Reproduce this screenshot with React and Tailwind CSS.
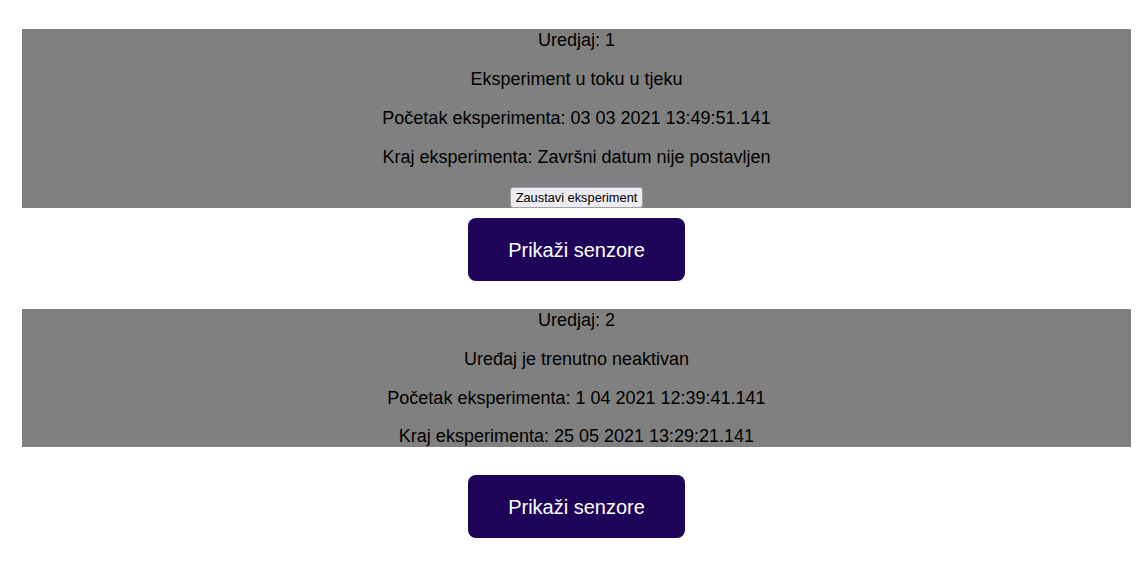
const devices = [
  {
    id: 1,
    status: "Eksperiment u toku u tjeku",
    start: "03 03 2021 13:49:51.141",
    end: "Završni datum nije postavljen",
    active: true,
  },
  {
    id: 2,
    status: "Uređaj je trenutno neaktivan",
    start: "1 04 2021 12:39:41.141",
    end: "25 05 2021 13:29:21.141",
    active: false,
  },
];

function DeviceCard({ device }) {
  return (
    <div className="flex flex-col items-center">
      <div className="w-full bg-[#808080] text-black text-[18px] leading-[22px] text-center flex flex-col items-center gap-[17px]">
        <p>Uredjaj: {device.id}</p>
        <p>{device.status}</p>
        <p>Početak eksperimenta: {device.start}</p>
        <p className={device.active ? "" : "leading-[21px]"}>
          Kraj eksperimenta: {device.end}
        </p>
        {device.active && (
          <button className="h-[21px] px-[5px] mt-[2px] text-[12.8px] leading-[15px] bg-[#ececf0] border border-[#a0a0a8] rounded-[3px] text-black">
            Zaustavi eksperiment
          </button>
        )}
      </div>
      <button
        className={
          "w-[217px] h-[63px] rounded-[8px] bg-[#1e0458] text-white text-[20px] " +
          (device.active ? "mt-[10px]" : "mt-[28px]")
        }
      >
        Prikaži senzore
      </button>
    </div>
  );
}

export default function App() {
  return (
    <div className="min-h-[563px] bg-white font-['Liberation_Sans',Arial,sans-serif] pt-[29px] pl-[22px] pr-[8px] flex flex-col gap-[28px]">
      {devices.map((d) => (
        <DeviceCard key={d.id} device={d} />
      ))}
    </div>
  );
}
